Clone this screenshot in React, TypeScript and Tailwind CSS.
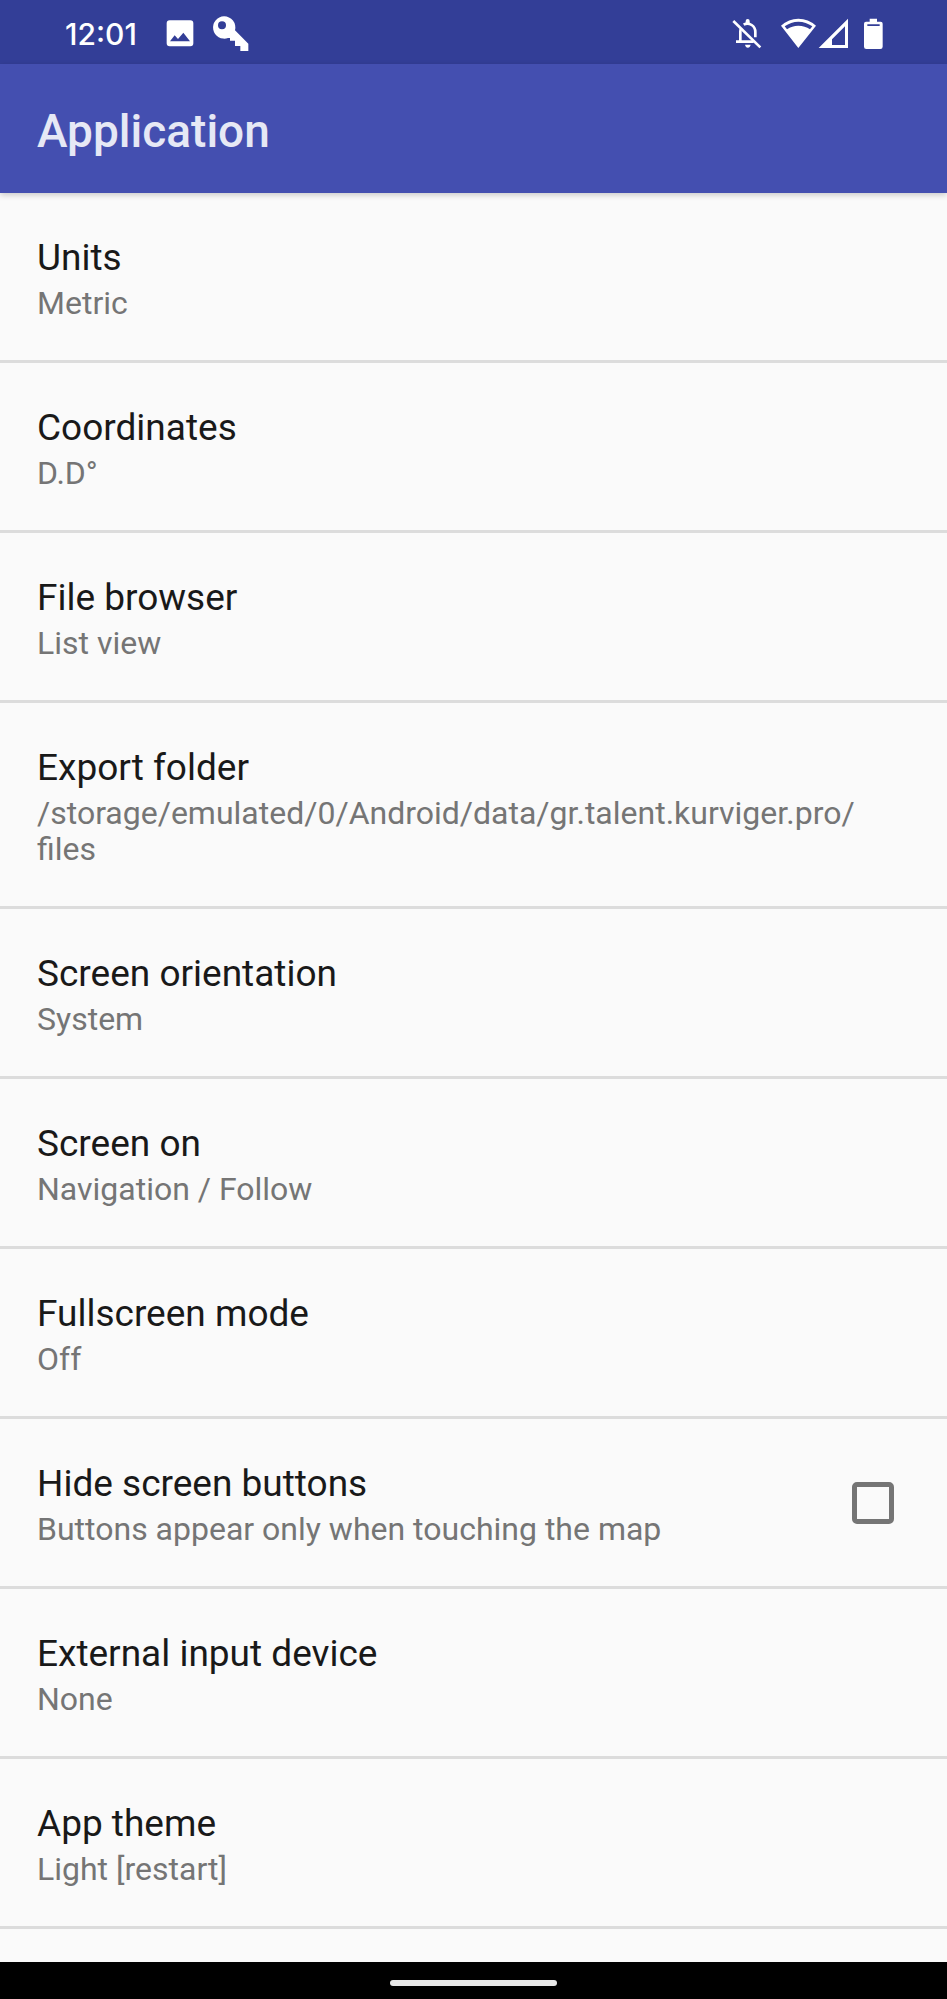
import React from "react";

type Setting = { title: string; summary: string; checkbox?: boolean };

const settings: Setting[] = [
  { title: "Units", summary: "Metric" },
  { title: "Coordinates", summary: "D.D°" },
  { title: "File browser", summary: "List view" },
  { title: "Export folder", summary: "/storage/emulated/0/Android/data/gr.talent.kurviger.pro/files" },
  { title: "Screen orientation", summary: "System" },
  { title: "Screen on", summary: "Navigation / Follow" },
  { title: "Fullscreen mode", summary: "Off" },
  { title: "Hide screen buttons", summary: "Buttons appear only when touching the map", checkbox: true },
  { title: "External input device", summary: "None" },
  { title: "App theme", summary: "Light [restart]" },
];

function Icon({ viewBox, children }: { viewBox: string; children: React.ReactNode }) {
  return (
    <svg viewBox={viewBox} className="size-10 shrink-0" fill="currentColor" aria-hidden="true">
      {children}
    </svg>
  );
}

function StatusBar() {
  return (
    <div className="flex h-16 items-center justify-between bg-[#333e97] pr-[49px] pl-[65px] text-white">
      <div className="flex items-center">
        <span className="w-[95px] pt-1 font-['Inter',sans-serif] text-[30px] leading-10 font-medium">12:01</span>
        <div className="flex gap-[10px]">
          <Icon viewBox="330 38 120 120">
            <path
              fillRule="evenodd"
              d="M359 63H421Q430 63 430 72V132Q430 141 421 141H359Q350 141 350 132V72Q350 63 359 63ZM360 126H420L400 100L384 119L374 108Z"
            />
          </Icon>
          <Icon viewBox="480 36 120 120">
            <path
              fillRule="evenodd"
              d="M522 49A33.500 33.500 0 0 1 555 91L595 131V153H571V138H555V122H540V114L534 114A33.500 33.500 0 1 1 522 49ZM516 64A12 12 0 1 0 516 88A12 12 0 1 0 516 64Z"
            />
          </Icon>
        </div>
      </div>
      <div className="flex items-center">
        <div className="mr-[11px] flex">
          <Icon viewBox="51 36 120 120">
            <g fill="none" stroke="currentColor" strokeWidth="8">
              <path d="M70 63L151 142" />
              <path d="M78 125H131M91 125V94Q91 88 94 84" />
              <path d="M101 74Q113 67 125 75Q136 82 136 96V112" />
            </g>
            <path d="M107 70V63Q107 57 113 57Q119 57 119 63V70ZM105 134H122Q120 143 113.500 143Q107 143 105 134Z" />
          </Icon>
        </div>
        <Icon viewBox="204 36 120 120">
          <path
            fillRule="evenodd"
            d="M213 77Q236 56 265 56Q295 56 318 77L265 144ZM224 79L231 88Q246 77 265 77Q285 77 300 88L307 79Q288 65 265 65Q243 65 224 79Z"
          />
        </Icon>
        <Icon viewBox="324 36 120 120">
          <path fillRule="evenodd" d="M414 56V144H326ZM405 79L366 118V135H405Z" />
        </Icon>
        <Icon viewBox="444 36 120 120">
          <path
            fillRule="evenodd"
            d="M479 56H501V65H512Q518 65 518 71V140Q518 147 511 147H469Q462 147 462 140V71Q462 65 468 65H479ZM472 73V78H509V73Z"
          />
        </Icon>
      </div>
    </div>
  );
}

/** Lets a long path wrap after any of its slashes. */
function Breakable({ text }: { text: string }) {
  return (
    <>
      {text.split(/(?<=\/)/).map((part, i) => (
        <React.Fragment key={i}>
          {i > 0 && <wbr />}
          {part}
        </React.Fragment>
      ))}
    </>
  );
}

function SettingText({ title, summary }: Setting) {
  return (
    <span className="flex min-w-0 flex-1 flex-col gap-[6px] pt-1">
      <span className="text-[37px] leading-[43px] text-[#191919]">{title}</span>
      <span className="text-[32px] leading-9 break-words text-[#757575]">
        <Breakable text={summary} />
      </span>
    </span>
  );
}

function SettingRow(setting: Setting) {
  const row = "flex w-full items-center px-[37px] py-[39px] text-left";
  return (
    <li className="border-b-3 border-[#dcdcdc]">
      {setting.checkbox ? (
        <label className={row}>
          <SettingText {...setting} />
          <input
            type="checkbox"
            className="mr-4 size-[42px] shrink-0 appearance-none rounded-[5px] border-5 border-[#757575] checked:bg-[#757575]"
          />
        </label>
      ) : (
        <button type="button" className={row}>
          <SettingText {...setting} />
        </button>
      )}
    </li>
  );
}

export default function App() {
  return (
    <div className="flex min-h-screen flex-col bg-[#fafafa] font-['Roboto',sans-serif]">
      <StatusBar />
      <header className="z-10 flex h-[129px] items-center bg-[#444fb0] px-[37px] pt-1 shadow-[0_2px_6px_rgba(0,0,0,0.2)]">
        <h1 className="text-[46px] leading-[54px] font-medium text-[#e6e8f5]">Application</h1>
      </header>
      <main className="flex-1">
        <ul>
          {settings.map((s) => (
            <SettingRow key={s.title} {...s} />
          ))}
        </ul>
      </main>
      <nav className="flex h-[37px] items-center justify-center bg-black pt-1" aria-label="System navigation">
        <button type="button" aria-label="Home" className="h-[6px] w-[167px] rounded-full bg-[#e8e8e8]" />
      </nav>
    </div>
  );
}
